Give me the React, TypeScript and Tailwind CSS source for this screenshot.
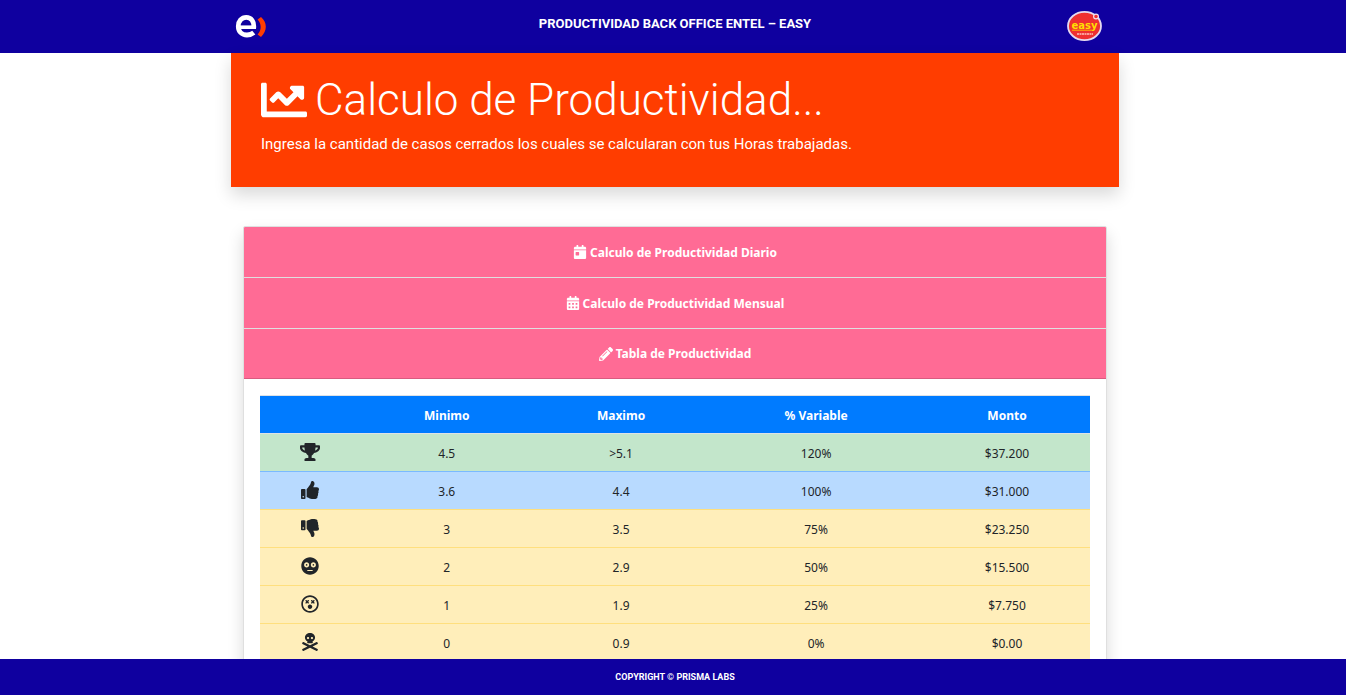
import type { IconType } from "react-icons";
import {
  FaCalendarAlt,
  FaCalendarDay,
  FaChartLine,
  FaFlushed,
  FaPencilAlt,
  FaRegDizzy,
  FaSkullCrossbones,
  FaThumbsDown,
  FaThumbsUp,
  FaTrophy,
} from "react-icons/fa";

type Row = { icon: IconType; label: string; cells: string[]; tone: string };

const rows: Row[] = [
  { icon: FaTrophy, label: "Trofeo", cells: ["4.5", ">5.1", "120%", "$37.200"], tone: "bg-[#c3e6cb] border-[#dee2e6]" },
  { icon: FaThumbsUp, label: "Pulgar arriba", cells: ["3.6", "4.4", "100%", "$31.000"], tone: "bg-[#b8daff] border-[#7abaff]" },
  { icon: FaThumbsDown, label: "Pulgar abajo", cells: ["3", "3.5", "75%", "$23.250"], tone: "bg-[#ffeeba] border-[#ffdf7e]" },
  { icon: FaFlushed, label: "Cara sonrojada", cells: ["2", "2.9", "50%", "$15.500"], tone: "bg-[#ffeeba] border-[#ffdf7e]" },
  { icon: FaRegDizzy, label: "Cara mareada", cells: ["1", "1.9", "25%", "$7.750"], tone: "bg-[#ffeeba] border-[#ffdf7e]" },
  { icon: FaSkullCrossbones, label: "Calavera", cells: ["0", "0.9", "0%", "$0.00"], tone: "bg-[#ffeeba] border-[#ffdf7e]" },
];

const sections: { icon: IconType; title: string }[] = [
  { icon: FaCalendarDay, title: "Calculo de Productividad Diario" },
  { icon: FaCalendarAlt, title: "Calculo de Productividad Mensual" },
  { icon: FaPencilAlt, title: "Tabla de Productividad" },
];

function EntelLogo() {
  return (
    <svg viewBox="0 0 32 26" className="h-[26px] w-8" role="img" aria-label="Entel">
      <path d="M4 14.200H21" fill="none" stroke="#fff" strokeWidth="3.6" />
      <path d="M18.700 15C19.300 8 16 4.400 11.300 4.400C6.500 4.400 3.300 8.200 3.300 13.200C3.300 18.600 6.800 22 12 22C14.800 22 17 21.200 18.800 19.700" fill="none" stroke="#fff" strokeWidth="4.8" />
      <path d="M22.600 6.500L26 4C32.400 9.400 32.400 18 26 24L22.600 21.500C26.700 17 26.700 11 22.600 6.500Z" fill="#ff3d00" />
    </svg>
  );
}

function EasyLogo() {
  return (
    <svg viewBox="0 0 36 32" className="h-8 w-9" role="img" aria-label="Easy">
      <ellipse cx="17.5" cy="16" rx="16.5" ry="14.2" fill="#ef3030" stroke="#e5daf0" strokeWidth="1.8" />
      <circle cx="29" cy="6.5" r="2.4" fill="#ef3030" stroke="#f2dfed" strokeWidth="1.2" />
      <text x="17.5" y="18.5" textAnchor="middle" className="font-['DejaVu_Sans',sans-serif] text-[10px] font-bold" fill="#ffdf00">easy</text>
      <path d="M5 20.2H25" stroke="#ffb800" strokeWidth="1" />
      <path d="M10 24H26" stroke="#ffc1b8" strokeWidth="1.4" strokeDasharray="2 .5" />
    </svg>
  );
}

export default function App() {
  return (
    <div className="min-h-screen bg-white pb-9 font-['Noto_Sans',sans-serif] text-[#212529]">
      <header className="h-[53px] bg-[#0f009f] pl-1">
        <div className="mx-auto grid h-full max-w-[888px] grid-cols-[1fr_auto_1fr] items-center pb-[2px] pl-1 pr-4">
          <EntelLogo />
          <h1 className="pb-1 pl-3 font-[Roboto,sans-serif] text-[13px] font-bold text-white">PRODUCTIVIDAD BACK OFFICE ENTEL – EASY</h1>
          <div className="justify-self-end">
            <EasyLogo />
          </div>
        </div>
      </header>

      <main className="pl-1">
        <div className="mx-auto max-w-[888px]">
          <section className="h-[134px] bg-[#ff3d00] px-[30px] pt-[18px] font-[Roboto,sans-serif] text-white shadow-[0_8px_16px_rgba(0,0,0,0.15)]">
            <h2 className="flex items-center gap-2 text-[44px] leading-[58px] font-light">
              <FaChartLine className="size-[46px] shrink-0" aria-hidden="true" />
              Calculo de Productividad...
            </h2>
            <p className="pt-[3px] text-[15px] leading-6">
              Ingresa la cantidad de casos cerrados los cuales se calcularan con tus Horas trabajadas.
            </p>
          </section>

          <section className="mx-3 mt-[39px] overflow-hidden rounded-xs border border-[#dfdfdf] bg-white shadow-[0_8px_16px_rgba(0,0,0,0.15)]">
            {sections.map(({ icon: Icon, title }, i) => (
              <h3 key={title} className={i < 2 ? "h-[51px] border-b border-[#dfdfdf]" : "h-[50px] border-b border-[#d95b80]"}>
                <button type="button" className="flex h-full w-full items-center justify-center gap-[3px] bg-[#ff6b95] pt-px text-xs font-bold text-white">
                  <Icon className="mb-px size-[14px]" aria-hidden="true" />
                  {title}
                </button>
              </h3>
            ))}

            <div className="px-4 py-4">
              <table className="w-full table-fixed border-collapse text-center text-xs leading-5">
                <colgroup>
                  <col className="w-[12%]" />
                  <col className="w-[21%]" />
                  <col className="w-[21%]" />
                  <col className="w-[26%]" />
                  <col className="w-[20%]" />
                </colgroup>
                <thead>
                  <tr className="h-[38px] border-t border-[#dee2e6] bg-[#007bff] text-white">
                    <td />
                    <th scope="col" className="pt-[2px]">Minimo</th>
                    <th scope="col" className="pt-[2px]">Maximo</th>
                    <th scope="col" className="pt-[2px]">% Variable</th>
                    <th scope="col" className="pt-[2px]">Monto</th>
                  </tr>
                </thead>
                <tbody>
                  {rows.map(({ icon: Icon, label, cells, tone }) => (
                    <tr key={label} className={`h-[38px] border-t ${tone}`}>
                      <td className="pb-px">
                        <Icon className="mx-auto h-[18px] w-5" role="img" aria-label={label} />
                      </td>
                      {cells.map((cell) => (
                        <td key={cell} className="pt-[2px]">{cell}</td>
                      ))}
                    </tr>
                  ))}
                </tbody>
              </table>
            </div>
          </section>
        </div>
      </main>

      <footer className="fixed inset-x-0 bottom-0 flex h-9 items-center justify-center bg-[#0f009f] pt-[2px] pl-1 font-[Roboto,sans-serif] text-[9px] font-bold text-white">
        COPYRIGHT © PRISMA LABS
      </footer>
    </div>
  );
}
